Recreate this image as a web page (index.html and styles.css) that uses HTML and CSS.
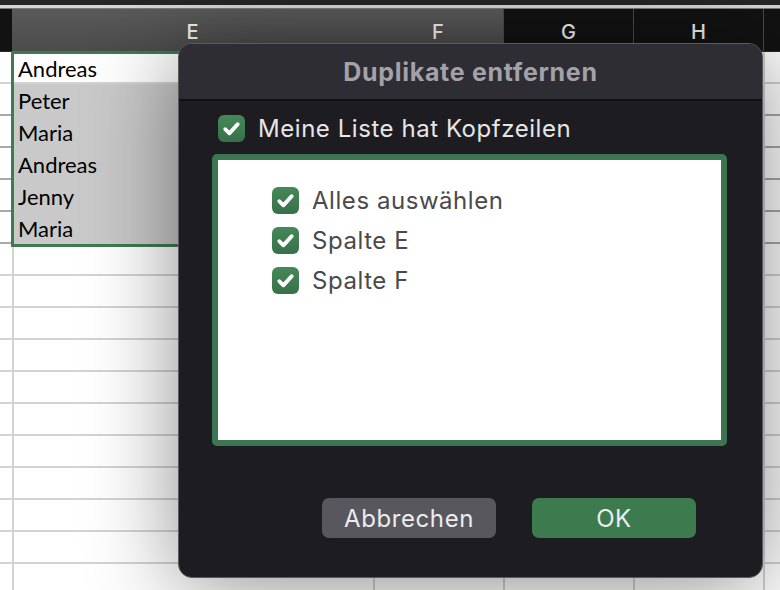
FILE: index.html
```html
<!DOCTYPE html>
<html lang="de">
<head>
  <meta charset="UTF-8" />
  <title>Duplikate entfernen</title>
  <link rel="stylesheet" href="styles.css">
</head>
<body>
  <div class="topbar"></div>
  <div class="topline"></div>

  <!-- SPREADSHEET -->
  <div class="sheet">
    <div class="colheads">
      <div class="ch dark"></div>
      <div class="ch sel">E</div>
      <div class="ch sel">F</div>
      <div class="ch dark sep">G</div>
      <div class="ch dark sep">H</div>
      <div class="ch dark sep"></div>
    </div>

    <div class="rows" id="rows"></div>
    <div class="range"></div>
  </div>

  <!-- DIALOG -->
  <div class="dialog">
    <div class="dialog-title">Duplikate entfernen</div>
    <div class="dialog-body">
      <label class="check head">
        <span class="box"><svg viewBox="0 0 20 20"><path d="M5 10.5l3.3 3.4L15 6.5"/></svg></span>
        Meine Liste hat Kopfzeilen
      </label>

      <div class="list">
        <label class="check">
          <span class="box"><svg viewBox="0 0 20 20"><path d="M5 10.5l3.3 3.4L15 6.5"/></svg></span>
          Alles auswählen
        </label>
        <label class="check">
          <span class="box"><svg viewBox="0 0 20 20"><path d="M5 10.5l3.3 3.4L15 6.5"/></svg></span>
          Spalte E
        </label>
        <label class="check">
          <span class="box"><svg viewBox="0 0 20 20"><path d="M5 10.5l3.3 3.4L15 6.5"/></svg></span>
          Spalte F
        </label>
      </div>

      <div class="buttons">
        <button class="btn cancel">Abbrechen</button>
        <button class="btn ok">OK</button>
      </div>
    </div>
  </div>

  <script>
    const names = ["Andreas", "Peter", "Maria", "Andreas", "Jenny", "Maria"];
    const rows = document.getElementById("rows");

    for (let i = 0; i < 17; i++) {
      const row = document.createElement("div");
      row.className = "row";
      const cells = ["", names[i] || "", "", "", "", ""];
      cells.forEach((text, c) => {
        const cell = document.createElement("div");
        cell.className = "cell";
        if (c === 1 && i < names.length) {
          cell.classList.add(i === 0 ? "active" : "picked");
        }
        cell.textContent = text;
        row.appendChild(cell);
      });
      rows.appendChild(row);
    }
  </script>
</body>
</html>
```

FILE: styles.css
```css
html, body {
  margin: 0;
  padding: 0;
  width: 780px;
  height: 590px;
  overflow: hidden;
  background: #ffffff;
  position: relative;
}

.topbar {
  height: 5px;
  background: #262626;
}

.topline {
  height: 3px;
  background: #d6d6d6;
  border-bottom: 1px solid #7a7a7a;
}

/* SHEET */
.sheet {
  position: relative;
}

.colheads,
.row {
  display: grid;
  grid-template-columns: 12px 361px 130px 130px 130px 1fr;
}

.colheads {
  height: 42px;
  border-bottom: 1px solid #2a2a2a;
}

.ch {
  display: flex;
  align-items: flex-end;
  justify-content: center;
  padding-bottom: 7px;
  box-sizing: border-box;
  font-family: Inter, sans-serif;
  font-size: 20px;
  font-weight: 500;
  color: #f2f2f2;
}

.ch.dark {
  background: #121212;
}

.ch.sep {
  border-left: 1px solid #4a4a4a;
}

.ch.sel {
  background: linear-gradient(#5a5a5a, #4b4b4b);
}

.row {
  height: 32px;
  box-sizing: border-box;
  border-bottom: 2px solid #d3d3d3;
}

.cell {
  border-left: 2px solid #d3d3d3;
  font-family: Lato, "Liberation Sans", sans-serif;
  font-size: 22px;
  line-height: 33px;
  padding-left: 4px;
  color: #000;
}

.cell:first-child {
  border-left: none;
}

.cell.picked {
  background: #c9c9c9;
}

.row:has(.picked) {
  border-bottom-color: #a9a9a9;
}

.range {
  position: absolute;
  left: 11px;
  top: 42px;
  width: 380px;
  height: 196px;
  border: 3px solid #3f7a52;
  box-sizing: border-box;
  pointer-events: none;
}

/* DIALOG */
.dialog {
  position: absolute;
  left: 178px;
  top: 43px;
  width: 585px;
  height: 535px;
  box-sizing: border-box;
  border: 1px solid #5b5a60;
  border-radius: 14px;
  background: #1d1c21;
  overflow: hidden;
  box-shadow: 0 8px 90px rgba(0, 0, 0, 0.45);
  font-family: Inter, "Noto Sans", sans-serif;
}

.dialog-title {
  height: 55px;
  background: #2e2d33;
  border-bottom: 2px solid #111113;
  display: flex;
  align-items: center;
  justify-content: center;
  font-size: 25px;
  font-weight: 700;
  letter-spacing: 0.7px;
  color: #a3a2a8;
}

.dialog-body {
  padding: 14px 0 0 33px;
}

.check {
  display: flex;
  align-items: center;
  gap: 13px;
  height: 40px;
  font-size: 24px;
  letter-spacing: 0.55px;
  color: #4a4a4c;
}

.check.head {
  height: 27px;
  margin-left: 6px;
  color: #e6e6e8;
}

.box {
  width: 27px;
  height: 27px;
  border-radius: 6px;
  background: linear-gradient(#458858, #37714a);
  display: flex;
  align-items: center;
  justify-content: center;
  flex-shrink: 0;
}

.box svg {
  width: 25px;
  height: 25px;
  fill: none;
  stroke: #ffffff;
  stroke-width: 3;
  stroke-linecap: round;
  stroke-linejoin: round;
}

.list {
  margin-top: 12px;
  width: 515px;
  height: 292px;
  box-sizing: border-box;
  border: 6px solid #3d7550;
  border-radius: 5px;
  background: #ffffff;
  padding: 20px 0 0 54px;
}

.buttons {
  display: flex;
  justify-content: flex-end;
  gap: 36px;
  margin-top: 52px;
  padding-right: 66px;
}

.btn {
  height: 40px;
  border: none;
  border-radius: 7px;
  font-family: Inter, "Noto Sans", sans-serif;
  font-size: 24px;
  letter-spacing: 0.6px;
  color: #ececee;
}

.btn.cancel {
  width: 174px;
  background: #58575d;
}

.btn.ok {
  width: 164px;
  background: #3c7b4e;
}
```
